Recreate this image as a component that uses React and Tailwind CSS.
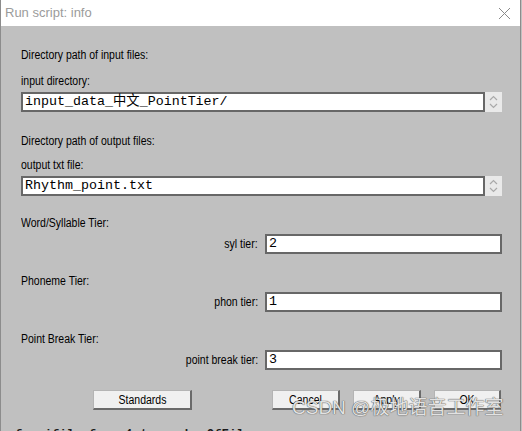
import React from "react";

const sans = "font-['Liberation_Sans',Arial,sans-serif] text-[12.5px] leading-[16px] text-black";
const mono = "font-['Liberation_Mono','Noto_Sans_CJK_SC',monospace] text-[13.33px] leading-[16px] text-black";

// the dialog font is a narrow one; squeeze Liberation Sans to match
function Label({ children, className = "", right = false }) {
  return (
    <div className={sans + " " + className}>
      <span className={"inline-block whitespace-nowrap scale-x-[0.84] " + (right ? "origin-right" : "origin-left")}>
        {children}
      </span>
    </div>
  );
}

function Spinner() {
  return (
    <div className="w-[17px] h-[20px] bg-[#e9e9e9] flex items-center justify-center">
      <svg width="9" height="14" viewBox="0 0 9 14" fill="none" stroke="#a9a9a9" strokeWidth="1.2">
        <path d="M1 5 L4.5 1.5 L8 5" />
        <path d="M1 9 L4.5 12.5 L8 9" />
      </svg>
    </div>
  );
}

function PathField({ value }) {
  return (
    <div className="flex">
      <div className="flex-1 h-[20px] bg-white border-2 border-[#676767] flex items-center pl-[2px]">
        <span className={mono}>{value}</span>
      </div>
      <Spinner />
    </div>
  );
}

function TierRow({ label, value }) {
  return (
    <div className="flex items-center mt-[3px]">
      <Label className="w-[237px] text-right" right>{label}</Label>
      <div className="ml-[7px] flex-1 h-[20px] bg-white border-2 border-[#676767] flex items-center pl-[2px]">
        <span className={mono}>{value}</span>
      </div>
    </div>
  );
}

function Btn({ children, w }) {
  return (
    <button
      className={
        sans +
        " h-[20px] bg-[#f0f0f0] border border-[#b4b4b4] border-b-2 border-r-2 border-b-[#6a6a6a] border-r-[#6a6a6a] flex items-center justify-center " +
        w
      }
    >
      <span className="inline-block scale-x-[0.84]">{children}</span>
    </button>
  );
}

export default function App() {
  return (
    <div className="w-[522px] h-[431px] overflow-hidden relative bg-[#c0c0c0]">
      <div className="w-[521px] h-[431px] border-l border-r border-[#8c8c8c] flex flex-col">
        <div className="h-[26px] bg-white flex items-center justify-between pl-[4px] pr-[9px]">
          <span className="font-['Liberation_Sans',Arial,sans-serif] text-[13px] text-[#9b9b9b]">Run script: info</span>
          <svg width="13" height="13" viewBox="0 0 13 13" stroke="#8a8a8a" strokeWidth="1">
            <path d="M1 1 L12 12 M12 1 L1 12" />
          </svg>
        </div>
        <div className="flex-1 flex flex-col pl-[20px] pr-[18px] pt-[21px] relative">
          <Label>Directory path of input files:</Label>
          <Label className="mt-[10px]">input directory:</Label>
          <div className="mt-[3px]">
            <PathField value="input_data_中文_PointTier/" />
          </div>
          <Label className="mt-[21px]">Directory path of output files:</Label>
          <Label className="mt-[8px]">output txt file:</Label>
          <div className="mt-[3px]">
            <PathField value="Rhythm_point.txt" />
          </div>

          <Label className="mt-[19px]">Word/Syllable Tier:</Label>
          <TierRow label="syl tier:" value="2" />
          <Label className="mt-[19px]">Phoneme Tier:</Label>
          <TierRow label="phon tier:" value="1" />
          <Label className="mt-[19px]">Point Break Tier:</Label>
          <TierRow label="point break tier:" value="3" />

          <div className="flex mt-[20px]">
            <div className="ml-[72px]">
              <Btn w="w-[99px]">Standards</Btn>
            </div>
            <div className="flex-1" />
            <div className="flex gap-[13px] mr-[1px]">
              <Btn w="w-[68px]">Cancel</Btn>
              <Btn w="w-[68px]">Apply</Btn>
              <Btn w="w-[67px]">OK</Btn>
            </div>
          </div>

          <div className="absolute left-[291px] top-[370px] font-['Liberation_Sans','Noto_Sans_CJK_SC',sans-serif] text-[19px] leading-[24px] text-[#e2e2e2] [text-shadow:0_0_1px_#555,0_0_1px_#555] whitespace-nowrap">
            CSDN @极地语音工作室
          </div>
        </div>
      </div>
      <div className="absolute left-[15px] top-[428px] font-['Liberation_Mono',monospace] font-bold text-[12.3px] leading-[14px] text-[#1a1a1a] whitespace-nowrap">
        for ifile from 1 to numberOfFiles
      </div>
    </div>
  );
}
